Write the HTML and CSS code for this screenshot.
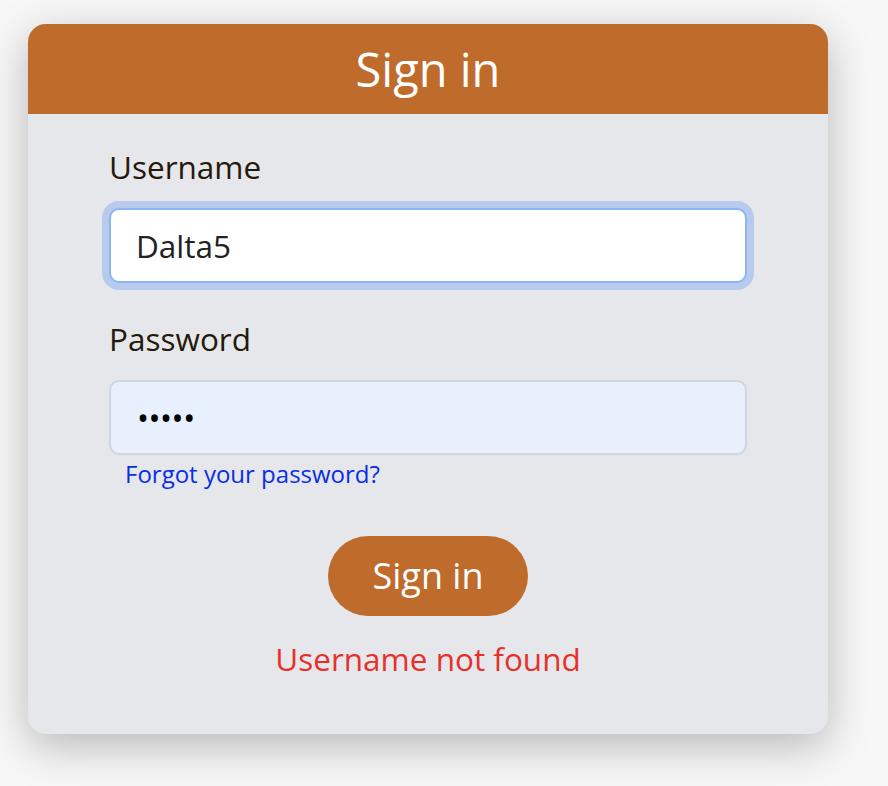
FILE: index.html
```html
<!DOCTYPE html>
<html lang="en">
<head>
<meta charset="utf-8">
<title>Sign in</title>
<link rel="stylesheet" href="styles.css">
</head>
<body>
<div class="card">
  <div class="card-header">Sign in</div>
  <form class="card-body" onsubmit="return false">
    <label class="field-label" for="username">Username</label>
    <input class="field-input field-focus" id="username" type="text" value="Dalta5">
    <label class="field-label field-label-second" for="password">Password</label>
    <input class="field-input field-autofill" id="password" type="password" value="abcde">
    <a class="forgot-link" href="#">Forgot your password?</a>
    <div class="actions">
      <button class="signin-btn" type="submit">Sign in</button>
    </div>
    <div class="error-msg">Username not found</div>
  </form>
</div>
</body>
</html>
```

FILE: styles.css
```css
* { box-sizing: border-box; }

html, body {
  margin: 0;
  background: #f7f7f7;
  min-height: 100vh;
}

body {
  padding: 24px 28px;
  font-family: "Open Sans", "Noto Sans", sans-serif;
}

.card {
  width: 800px;
  height: 710px;
  background: #e6e7ea;
  border-radius: 18px;
  overflow: hidden;
  box-shadow: 0 12px 44px rgba(0, 0, 0, 0.26);
}

.card-header {
  height: 90px;
  background: #bf6b2b;
  color: #ffffff;
  font-size: 47px;
  line-height: 90px;
  text-align: center;
}

.card-body {
  display: flex;
  flex-direction: column;
  margin: 0;
  padding: 32px 81px 0;
}

.field-label {
  font-size: 31.5px;
  line-height: 42px;
  color: #24190b;
  margin-bottom: 20px;
}

.field-label-second {
  margin-top: 35px;
}

.field-input {
  height: 75px;
  width: 100%;
  border-radius: 10px;
  font-family: "Open Sans", "Noto Sans", sans-serif;
  font-size: 31.5px;
  color: #222222;
  padding: 0 0 0 25px;
  outline: none;
}

.field-focus {
  background: #ffffff;
  border: 2px solid #8db5f5;
  box-shadow: 0 0 0 7px #b8cbee;
}

.field-autofill {
  background: #e8f0fe;
  border: 2px solid #cfd5dd;
  color: #000000;
  padding-left: 26px;
  font-size: 32px;
  letter-spacing: -0.5px;
}

.forgot-link {
  align-self: flex-start;
  margin: 2px 0 0 16px;
  font-size: 24px;
  line-height: 33px;
  color: #0a2ee6;
  text-decoration: none;
}

.actions {
  display: flex;
  justify-content: center;
  margin-top: 46px;
}

.signin-btn {
  height: 80px;
  padding: 0 45px;
  border: none;
  border-radius: 40px;
  background: #bf6b2b;
  color: #ffffff;
  font-family: "Open Sans", "Noto Sans", sans-serif;
  font-size: 36px;
  line-height: 80px;
  cursor: pointer;
}

.error-msg {
  margin-top: 22px;
  text-align: center;
  font-size: 31.5px;
  line-height: 42px;
  color: #e8302a;
}
```
